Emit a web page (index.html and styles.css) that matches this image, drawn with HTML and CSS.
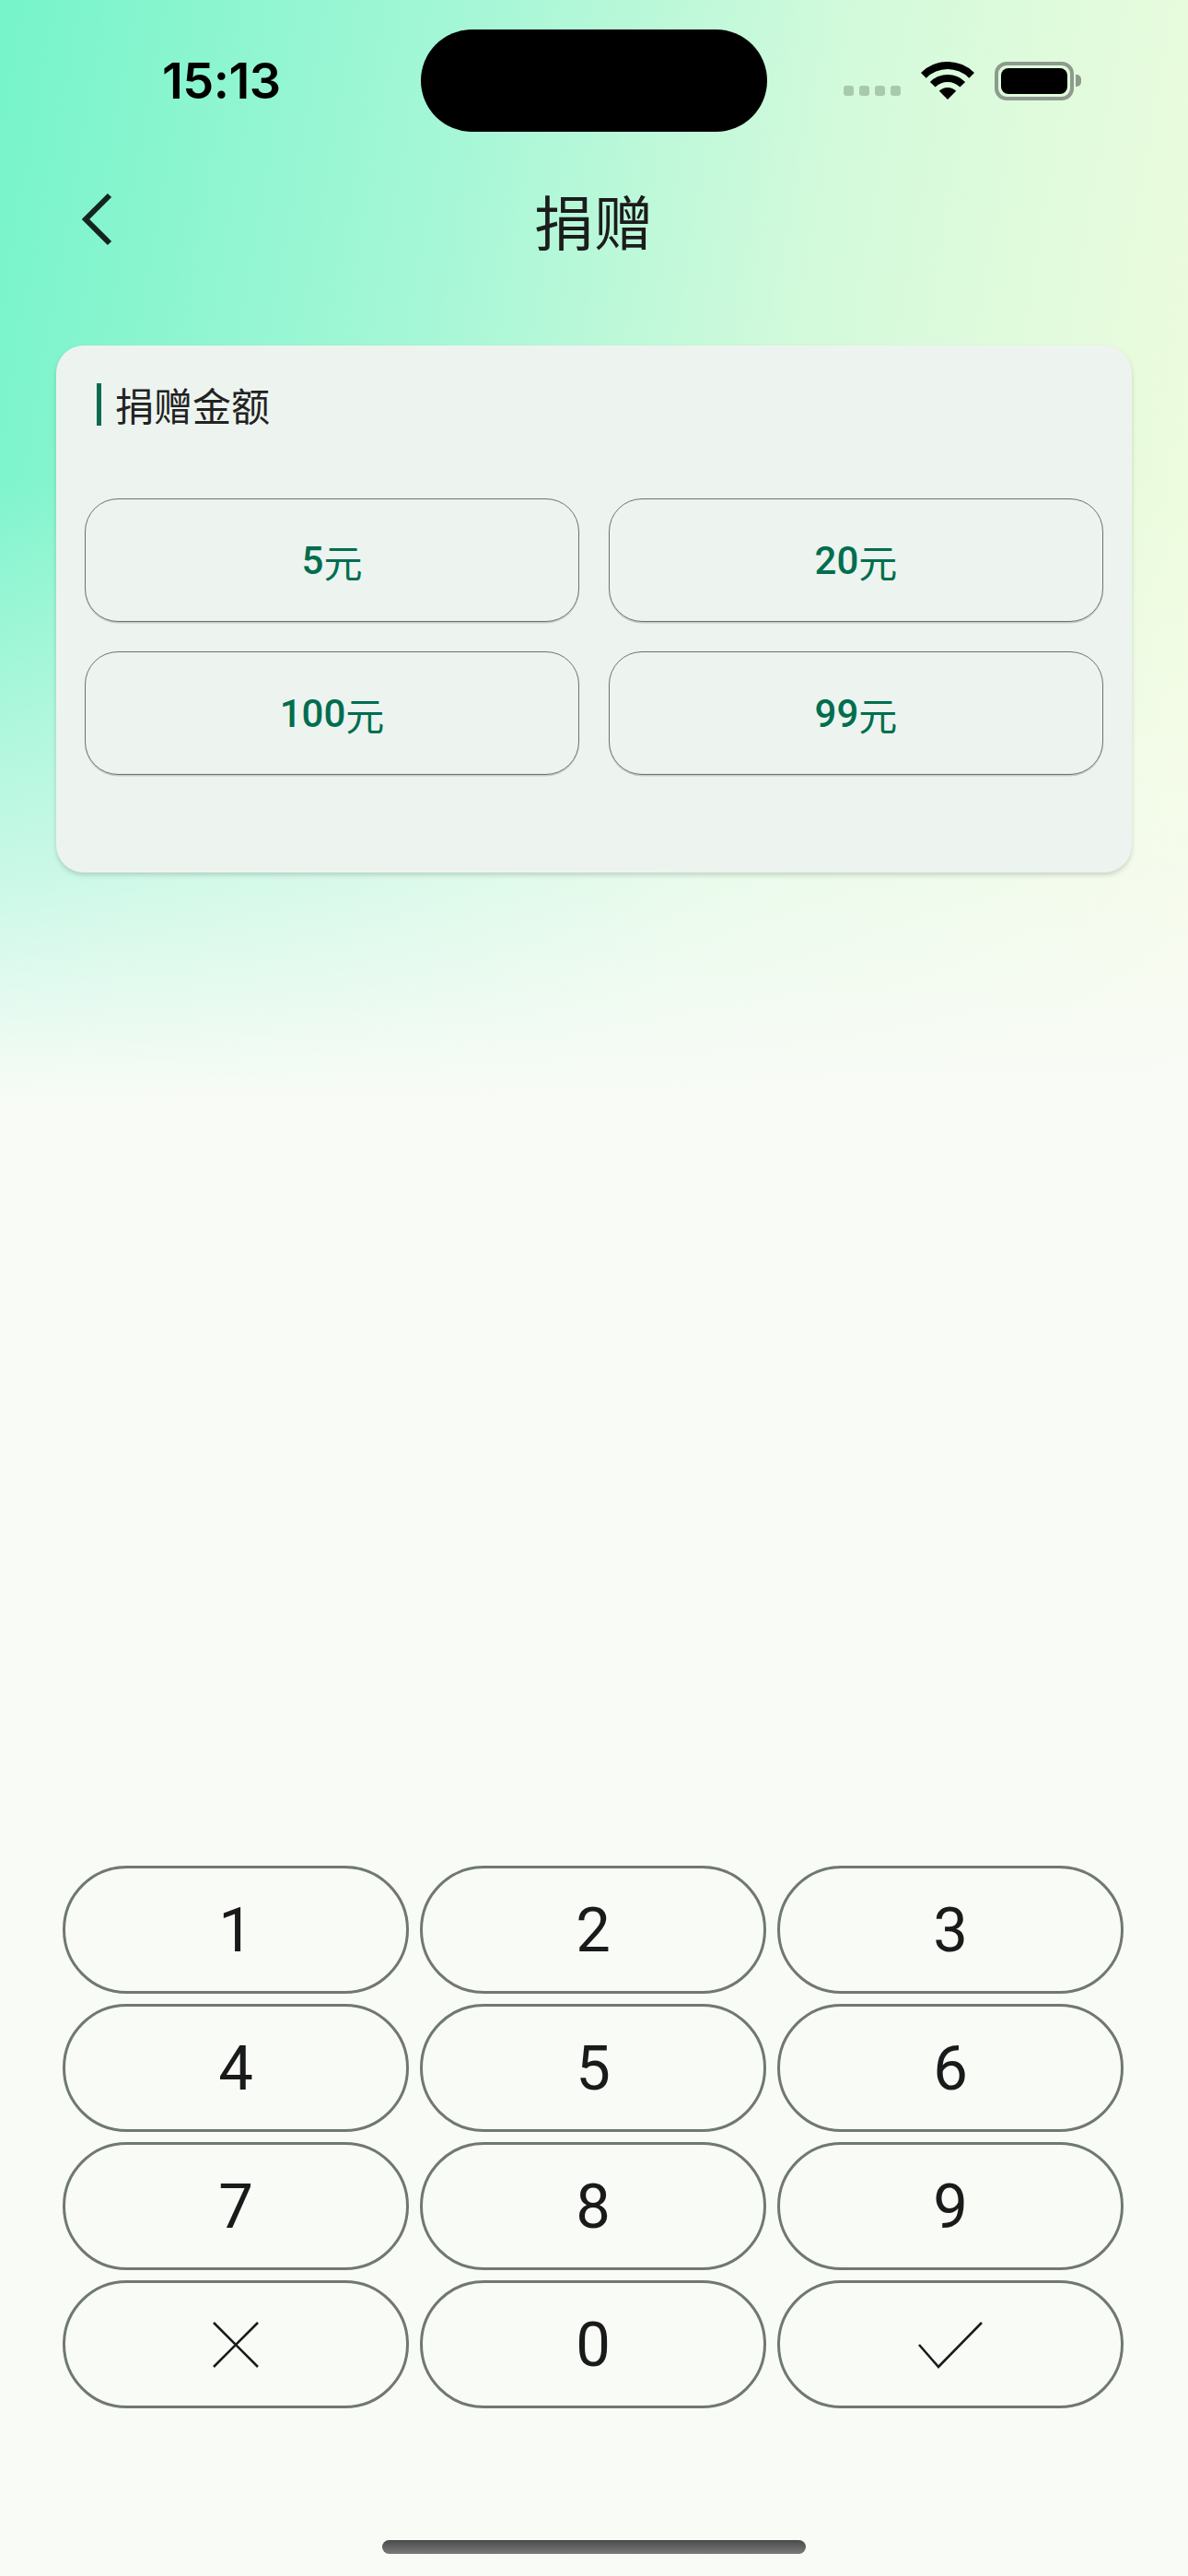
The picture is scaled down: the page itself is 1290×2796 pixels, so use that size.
FILE: index.html
```html
<!DOCTYPE html>
<html lang="zh-CN">
<head>
<meta charset="utf-8">
<title>捐赠</title>
<link rel="stylesheet" href="styles.css">
</head>
<body>
<div class="page">
  <div class="statusbar">
    <div class="sb-left"><span class="time">15:13</span></div>
    <div class="island"></div>
    <div class="sb-right">
      <div class="dots"><i></i><i></i><i></i><i></i></div>
      <svg class="wifi" width="58" height="42" viewBox="0 0 58 42">
        <path d="M0,12 A41,41 0 0 1 58,12 L52.3,17.7 A33,33 0 0 0 5.7,17.7 Z" fill="#000"/>
        <path d="M9.9,21.9 A27,27 0 0 1 48.1,21.9 L42.4,27.6 A19,19 0 0 0 15.6,27.6 Z" fill="#000"/>
        <path d="M29,41 L19.8,31.8 A13,13 0 0 1 38.2,31.8 Z" fill="#000"/>
      </svg>
      <div class="battery"><div class="battery-body"><div class="battery-fill"></div></div><div class="battery-nub"></div></div>
    </div>
  </div>

  <div class="header">
    <div class="back">
      <svg width="40" height="60" viewBox="0 0 40 60">
        <polyline points="33,4 7,30 33,56" fill="none" stroke="#16241f" stroke-width="6"/>
      </svg>
    </div>
    <div class="title">捐赠</div>
    <div></div>
  </div>

  <div class="card">
    <div class="card-title"><span class="bar"></span><span>捐赠金额</span></div>
    <div class="amounts">
      <div class="amount"><span class="num">5</span>元</div>
      <div class="amount"><span class="num">20</span>元</div>
      <div class="amount"><span class="num">100</span>元</div>
      <div class="amount"><span class="num">99</span>元</div>
    </div>
  </div>

  <div class="keypad">
    <div class="key">1</div>
    <div class="key">2</div>
    <div class="key">3</div>
    <div class="key">4</div>
    <div class="key">5</div>
    <div class="key">6</div>
    <div class="key">7</div>
    <div class="key">8</div>
    <div class="key">9</div>
    <div class="key">
      <svg width="50" height="50" viewBox="0 0 50 50"><path d="M1,1 L49,49 M49,1 L1,49" stroke="#1a1a1a" stroke-width="2.6" fill="none"/></svg>
    </div>
    <div class="key">0</div>
    <div class="key">
      <svg width="70" height="52" viewBox="0 0 70 52"><polyline points="1,26 22,50 69,2" stroke="#1a1a1a" stroke-width="2.6" fill="none"/></svg>
    </div>
  </div>

  <div class="home"><div class="home-bar"></div></div>
</div>
</body>
</html>
```

FILE: styles.css
```css
* { box-sizing: border-box; }
html, body { margin: 0; padding: 0; }
body {
  width: 1290px;
  min-height: 2796px;
  font-family: "Noto Sans CJK SC", "Noto Sans", sans-serif;
  background-color: #f9fbf7;
  background-image:
    linear-gradient(180deg, rgba(249,251,247,0) 0px, rgba(249,251,247,0) 520px, rgba(249,251,247,0.6) 960px, #f9fbf7 1200px),
    linear-gradient(100deg, #76f4ca 0%, #a6f7d7 35%, #d2fadb 62%, #f4fcde 100%);
  background-size: 100% 1200px, 100% 1200px;
  background-repeat: no-repeat;
}
.page {
  height: 2796px;
  display: flex;
  flex-direction: column;
}

/* status bar */
.statusbar {
  height: 175px;
  padding-top: 32px;
  display: grid;
  grid-template-columns: 457px 376px 1fr;
  align-items: start;
}
.sb-left {
  height: 111px;
  display: flex;
  align-items: center;
  padding-left: 176px;
}
.time {
  font-family: "Inter", "Roboto", sans-serif;
  font-weight: 600;
  font-size: 54px;
  line-height: 1;
  letter-spacing: -0.5px;
  color: #000;
}
.island {
  height: 111px;
  background: #000;
  border-radius: 56px;
}
.sb-right {
  height: 111px;
  display: flex;
  align-items: center;
  padding-left: 83px;
  gap: 22px;
}
.dots {
  display: flex;
  gap: 6px;
  align-self: center;
  margin-top: 21px;
}
.dots i {
  display: block;
  width: 11px;
  height: 11px;
  border-radius: 3px;
  background: #a9c9ad;
}
.wifi { display: block; }
.battery {
  display: flex;
  align-items: center;
}
.battery-body {
  width: 86px;
  height: 42px;
  border: 4px solid #8d9b8d;
  border-radius: 13px;
  padding: 3px;
}
.battery-fill {
  width: 100%;
  height: 100%;
  background: #000;
  border-radius: 8px;
}
.battery-nub {
  width: 6px;
  height: 13px;
  margin-left: 2px;
  background: #8d9b8d;
  border-radius: 0 5px 5px 0;
}

/* header */
.header {
  height: 125px;
  display: grid;
  grid-template-columns: 1fr auto 1fr;
  align-items: center;
}
.back {
  padding-left: 86px;
  display: flex;
  align-items: center;
}
.back svg { display: block; }
.title {
  font-size: 64px;
  line-height: 1;
  color: #1c1c1c;
  letter-spacing: 1px;
}

/* card */
.card {
  margin: 75px 61px 0;
  height: 572px;
  background: #edf4ef;
  border-radius: 30px;
  box-shadow: 0 3px 5px rgba(60, 80, 70, 0.22);
  padding: 41px 31px 0;
}
.card-title {
  display: flex;
  align-items: center;
  gap: 15px;
  padding-left: 13px;
  font-size: 42px;
  line-height: 46px;
  color: #222;
}
.card-title .bar {
  width: 5px;
  height: 46px;
  background: #0b6b4f;
}
.amounts {
  margin-top: 79px;
  display: grid;
  grid-template-columns: 1fr 1fr;
  gap: 32px;
}
.amount {
  height: 134px;
  border: 1.5px solid #707070;
  border-radius: 36px;
  box-shadow: 0 1.5px 0 rgba(0, 0, 0, 0.18);
  display: flex;
  align-items: center;
  justify-content: center;
  font-family: "Noto Sans CJK SC", sans-serif;
  font-weight: 400;
  font-size: 42px;
  color: #006e4f;
}
.amount .num {
  font-family: "Roboto", sans-serif;
  font-weight: 500;
}

/* keypad */
.keypad {
  margin: auto 70px 0 68px;
  display: grid;
  grid-template-columns: repeat(3, 1fr);
  column-gap: 12px;
  row-gap: 11px;
}
.key {
  height: 139px;
  border: 3px solid #6f7873;
  border-radius: 70px;
  display: flex;
  align-items: center;
  justify-content: center;
  font-family: "Roboto", "Inter", sans-serif;
  font-size: 67px;
  color: #1a1a1a;
}
.key svg { display: block; }

/* home indicator */
.home {
  height: 182px;
  display: flex;
  align-items: flex-end;
  justify-content: center;
  padding-bottom: 24px;
}
.home-bar {
  width: 460px;
  height: 15px;
  border-radius: 8px;
  background: linear-gradient(180deg, #4a4a4a, #7a7a7a);
}
```
